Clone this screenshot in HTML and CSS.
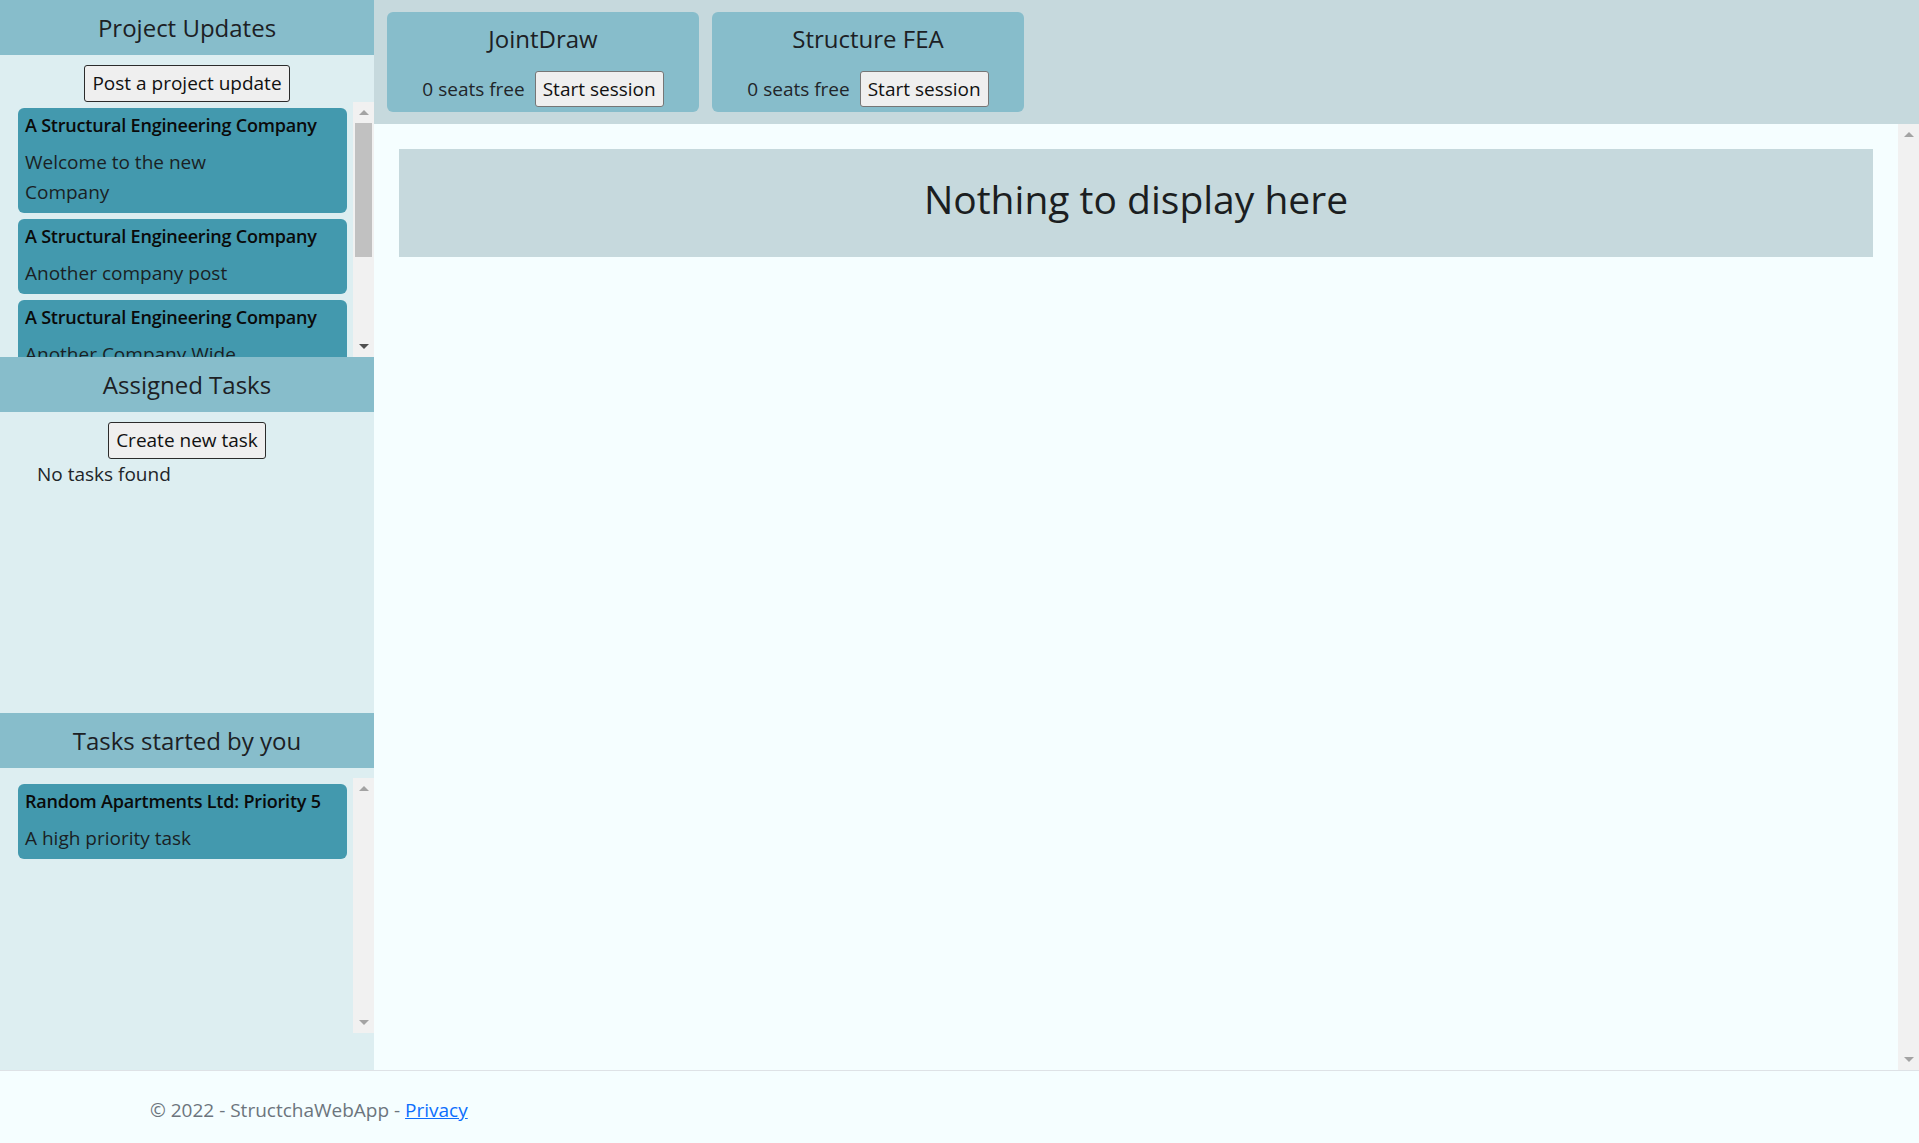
FILE: index.html
```html
<!DOCTYPE html>
<html lang="en">
<head>
<meta charset="utf-8">
<title>StructchaWebApp</title>
<link rel="stylesheet" href="styles.css">
</head>
<body>
<div class="app">
  <aside class="sidebar">
    <section class="panel">
      <h5 class="panel-title">Project Updates</h5>
      <div class="panel-action"><button class="btn">Post a project update</button></div>
      <div class="feed">
        <div class="feed-list">
          <div class="post">
            <h6 class="post-title">A Structural Engineering Company</h6>
            <p class="post-body">Welcome to the new<br>Company</p>
          </div>
          <div class="post">
            <h6 class="post-title">A Structural Engineering Company</h6>
            <p class="post-body">Another company post</p>
          </div>
          <div class="post">
            <h6 class="post-title">A Structural Engineering Company</h6>
            <p class="post-body">Another Company Wide</p>
          </div>
        </div>
        <div class="vscroll">
          <div class="vs-btn"><svg width="10" height="5" viewBox="0 0 10 5"><polygon points="0,5 5,0 10,5" fill="#a3a3a3"/></svg></div>
          <div class="vs-track"><div class="vs-thumb"></div></div>
          <div class="vs-btn"><svg width="10" height="5" viewBox="0 0 10 5"><polygon points="0,0 10,0 5,5" fill="#505050"/></svg></div>
        </div>
      </div>
    </section>
    <section class="panel">
      <h5 class="panel-title">Assigned Tasks</h5>
      <div class="panel-action"><button class="btn">Create new task</button></div>
      <p class="empty-note">No tasks found</p>
    </section>
    <section class="panel">
      <h5 class="panel-title">Tasks started by you</h5>
      <div class="feed feed-spaced">
        <div class="feed-list">
          <div class="post">
            <h6 class="post-title">Random Apartments Ltd: Priority 5</h6>
            <p class="post-body">A high priority task</p>
          </div>
        </div>
        <div class="vscroll">
          <div class="vs-btn"><svg width="10" height="5" viewBox="0 0 10 5"><polygon points="0,5 5,0 10,5" fill="#a3a3a3"/></svg></div>
          <div class="vs-track"></div>
          <div class="vs-btn"><svg width="10" height="5" viewBox="0 0 10 5"><polygon points="0,0 10,0 5,5" fill="#a3a3a3"/></svg></div>
        </div>
      </div>
    </section>
  </aside>
  <div class="workspace">
    <div class="toolbar">
      <div class="app-card">
        <h5 class="app-name">JointDraw</h5>
        <div class="app-row"><span class="seats">0 seats free</span><button class="btn btn-light">Start session</button></div>
      </div>
      <div class="app-card">
        <h5 class="app-name">Structure FEA</h5>
        <div class="app-row"><span class="seats">0 seats free</span><button class="btn btn-light">Start session</button></div>
      </div>
    </div>
    <div class="workspace-body">
      <main class="content">
        <div class="empty-box">
          <h2 class="empty-title">Nothing to display here</h2>
        </div>
      </main>
      <div class="vscroll">
        <div class="vs-btn"><svg width="10" height="5" viewBox="0 0 10 5"><polygon points="0,5 5,0 10,5" fill="#a3a3a3"/></svg></div>
        <div class="vs-track"></div>
        <div class="vs-btn"><svg width="10" height="5" viewBox="0 0 10 5"><polygon points="0,0 10,0 5,5" fill="#a3a3a3"/></svg></div>
      </div>
    </div>
  </div>
</div>
<footer class="footer">
  <div class="footer-inner">© 2022 - StructchaWebApp - <a href="#" class="footer-link">Privacy</a></div>
</footer>
</body>
</html>
```
FILE: styles.css
```css
* { box-sizing: border-box; }

html, body {
  margin: 0;
  padding: 0;
  height: 1143px;
  overflow: hidden;
}

body {
  font-family: "Open Sans", "Noto Sans", "Liberation Sans", sans-serif;
  font-size: 19px;
  line-height: 30px;
  color: #212529;
  background: #f5feff;
  display: flex;
  flex-direction: column;
}

h2, h5, h6, p { margin: 0; }

.app {
  height: 1070px;
  display: flex;
  flex: none;
}

/* ---------- sidebar ---------- */
.sidebar {
  width: 374px;
  flex: none;
  background: #ddeef1;
  display: flex;
  flex-direction: column;
}

.panel {
  flex: 1 1 0;
  min-height: 0;
  display: flex;
  flex-direction: column;
}

.panel-title {
  height: 55px;
  line-height: 55px;
  flex: none;
  background: #87bdcb;
  text-align: center;
  font-size: 24px;
  font-weight: 400;
  color: #1c2024;
}

.panel-action {
  padding-top: 10px;
  display: flex;
  justify-content: center;
  flex: none;
}

.btn {
  font-family: inherit;
  font-size: 19px;
  line-height: 31px;
  height: 37px;
  padding: 0 7px;
  color: #111;
  background: #efefef;
  border: 1px solid #2b2b2b;
  border-radius: 3px;
  white-space: nowrap;
  flex: none;
}

.btn-light {
  height: 36px;
  line-height: 30px;
  border-color: #767676;
}

.feed {
  height: 255px;
  flex: none;
  display: flex;
}

.feed-spaced { margin-top: 10px; }

.feed-list {
  flex: 1;
  min-width: 0;
  overflow: hidden;
  padding: 6px 6px 0 18px;
}

.post {
  background: #4399ae;
  border-radius: 6px;
  padding: 5px 7px 6px;
  margin-bottom: 6px;
}

.post-title {
  font-size: 18px;
  font-weight: 600;
  line-height: 24px;
  letter-spacing: -0.2px;
  margin-bottom: 10px;
  color: #0a0a0a;
  white-space: nowrap;
}

.post-body {
  font-size: 19px;
  line-height: 30px;
  color: #1a1f24;
}

.empty-note {
  padding-left: 37px;
}

/* fake classic scrollbar */
.vscroll {
  width: 21px;
  flex: none;
  background: #f1f1f1;
  display: flex;
  flex-direction: column;
}

.vs-btn {
  height: 21px;
  flex: none;
  display: flex;
  align-items: center;
  justify-content: center;
}

.vs-track {
  flex: 1;
  padding: 0 2px;
}

.vs-thumb {
  height: 134px;
  background: #c1c1c1;
}

/* ---------- workspace ---------- */
.workspace {
  flex: 1;
  min-width: 0;
  display: flex;
  flex-direction: column;
}

.toolbar {
  flex: none;
  height: 124px;
  background: #c6d9dd;
  padding: 12px 13px;
  display: flex;
  gap: 13px;
}

.app-card {
  width: 312px;
  height: 100px;
  flex: none;
  background: #87bdcb;
  border-radius: 6px;
  padding-top: 12px;
  text-align: center;
}

.app-name {
  font-size: 24px;
  font-weight: 400;
  line-height: 30px;
  color: #1c2024;
}

.app-row {
  margin-top: 17px;
  display: flex;
  justify-content: center;
  align-items: center;
  gap: 10px;
  white-space: nowrap;
}

.seats {
  line-height: 30px;
}

.workspace-body {
  flex: 1;
  min-height: 0;
  display: flex;
}

.content {
  flex: 1;
  min-width: 0;
  background: #f5feff;
  padding: 25px;
}

.empty-box {
  background: #c6d9dd;
  height: 108px;
  padding-top: 26px;
  text-align: center;
}

.empty-title {
  font-size: 39px;
  font-weight: 500;
  line-height: 48px;
  color: #1b1e21;
}

/* ---------- footer ---------- */
.footer {
  flex: none;
  height: 73px;
  border-top: 1px solid #dee2e6;
  background: #f5feff;
  color: #6c757d;
  line-height: 78px;
  white-space: nowrap;
}

.footer-inner {
  padding-left: 150px;
}

.footer-link {
  color: #0d6efd;
}
```
